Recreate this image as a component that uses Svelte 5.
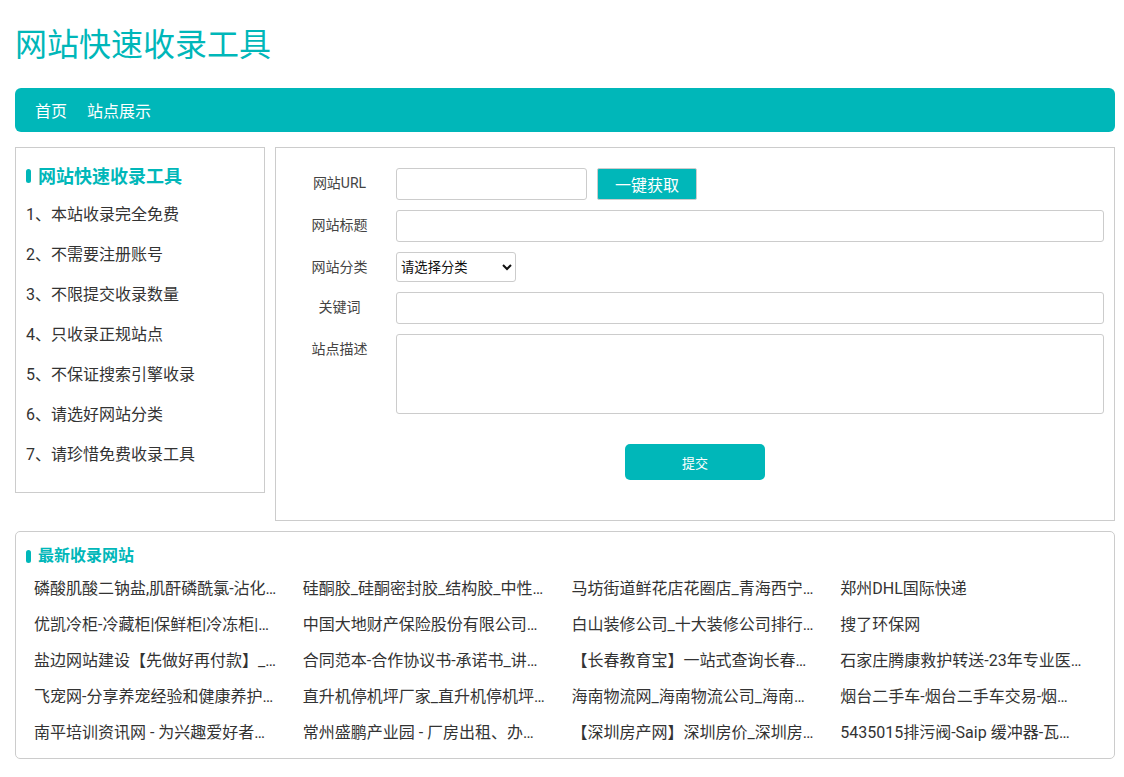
<script>
  const rules = [
    '1、本站收录完全免费',
    '2、不需要注册账号',
    '3、不限提交收录数量',
    '4、只收录正规站点',
    '5、不保证搜索引擎收录',
    '6、请选好网站分类',
    '7、请珍惜免费收录工具'
  ]

  const sites = [
    '磷酸肌酸二钠盐,肌酐磷酰氯-沾化…',
    '硅酮胶_硅酮密封胶_结构胶_中性…',
    '马坊街道鲜花店花圈店_青海西宁…',
    '郑州DHL国际快递',
    '优凯冷柜-冷藏柜|保鲜柜|冷冻柜|…',
    '中国大地财产保险股份有限公司…',
    '白山装修公司_十大装修公司排行…',
    '搜了环保网',
    '盐边网站建设【先做好再付款】_…',
    '合同范本-合作协议书-承诺书_讲…',
    '【长春教育宝】一站式查询长春…',
    '石家庄腾康救护转送-23年专业医…',
    '飞宠网-分享养宠经验和健康养护…',
    '直升机停机坪厂家_直升机停机坪…',
    '海南物流网_海南物流公司_海南…',
    '烟台二手车-烟台二手车交易-烟…',
    '南平培训资讯网 - 为兴趣爱好者…',
    '常州盛鹏产业园 - 厂房出租、办…',
    '【深圳房产网】深圳房价_深圳房…',
    '5435015排污阀-Saip 缓冲器-瓦…'
  ]
</script>

<div class="page">
  <h1>网站快速收录工具</h1>

  <nav class="nav">
    <a href="#home">首页</a>
    <a href="#sites">站点展示</a>
  </nav>

  <div class="columns">
    <aside class="side">
      <h2 class="head">网站快速收录工具</h2>
      <ul>
        {#each rules as rule}
          <li>{rule}</li>
        {/each}
      </ul>
    </aside>

    <form class="form">
      <div class="row">
        <label for="url">网站URL</label>
        <input id="url" class="short" type="text" />
        <button type="button" class="fetch">一键获取</button>
      </div>
      <div class="row">
        <label for="title">网站标题</label>
        <input id="title" type="text" />
      </div>
      <div class="row">
        <label for="cat">网站分类</label>
        <select id="cat">
          <option>请选择分类</option>
        </select>
      </div>
      <div class="row">
        <label for="kw">关键词</label>
        <input id="kw" type="text" />
      </div>
      <div class="row">
        <label for="desc">站点描述</label>
        <textarea id="desc"></textarea>
      </div>
      <div class="actions">
        <button type="button" class="submit">提交</button>
      </div>
    </form>
  </div>

  <section class="latest">
    <h2 class="head small">最新收录网站</h2>
    <div class="grid">
      {#each sites as site}
        <a href="#site" class="site">{site}</a>
      {/each}
    </div>
  </section>
</div>

<style>
  :global(body) {
    background: #fff;
  }

  .page {
    padding: 0 9px 0 15px;
    font-family: Roboto, "Noto Sans CJK SC", sans-serif;
    color: #333;
    font-size: 16px;
  }

  h1 {
    margin: 0;
    padding-top: 22px;
    height: 88px;
    box-sizing: border-box;
    font-size: 32px;
    line-height: 46px;
    font-weight: 400;
    color: #00b7b9;
  }

  .nav {
    display: flex;
    gap: 20px;
    height: 44px;
    padding-left: 20px;
    background: #00b7b9;
    border-radius: 6px;
    align-items: center;
  }

  .nav a {
    color: #fff;
    text-decoration: none;
    font-size: 16px;
  }

  .columns {
    display: flex;
    align-items: flex-start;
    gap: 10px;
    margin-top: 15px;
  }

  .side {
    width: 250px;
    height: 346px;
    box-sizing: border-box;
    border: 1px solid #ccc;
    padding: 17px 10px 0;
  }

  .head {
    margin: 0;
    padding-left: 12px;
    position: relative;
    font-size: 18px;
    line-height: 24px;
    font-weight: 700;
    color: #00b7b9;
  }

  .head::before {
    content: "";
    position: absolute;
    left: 0;
    top: 4px;
    width: 5px;
    height: 14px;
    border-radius: 3px;
    background: #00b7b9;
  }

  .side ul {
    list-style: none;
    margin: 6px 0 0;
    padding: 0;
  }

  .side li {
    height: 40px;
    line-height: 40px;
    white-space: nowrap;
  }

  .form {
    flex: 1;
    height: 374px;
    box-sizing: border-box;
    border: 1px solid #ccc;
    padding: 20px 10px 0 0;
  }

  .row {
    display: flex;
    align-items: flex-start;
    gap: 10px;
    margin-bottom: 10px;
  }

  label {
    width: 110px;
    padding-left: 17px;
    flex: none;
    box-sizing: border-box;
    text-align: center;
    font-size: 14px;
    line-height: 30px;
    color: #444;
  }

  input,
  textarea {
    flex: 1;
    min-width: 0;
    height: 32px;
    box-sizing: border-box;
    border: 1px solid #ccc;
    border-radius: 3px;
    background: #fff;
    padding: 0 6px;
    margin: 0;
    font: inherit;
  }

  input.short {
    flex: none;
    width: 191px;
  }

  textarea {
    height: 80px;
    resize: none;
    display: block;
  }

  select {
    width: 120px;
    height: 30px;
    box-sizing: border-box;
    border: 1px solid #ccc;
    border-radius: 3px;
    background: #fff;
    color: #111;
    font-family: inherit;
    font-size: 13.33px;
    margin: 0;
  }

  button {
    border: 0;
    color: #fff;
    background: #00b7b9;
    font-family: inherit;
    margin: 0;
    padding: 0;
  }

  .fetch {
    width: 100px;
    height: 32px;
    border: 1px solid #ccc;
    border-radius: 2px;
    font-size: 16px;
  }

  .actions {
    display: flex;
    justify-content: center;
    margin-top: 30px;
    padding-left: 10px;
  }

  .submit {
    width: 140px;
    height: 36px;
    border-radius: 5px;
    font-size: 13px;
  }

  .latest {
    margin-top: 10px;
    height: 228px;
    box-sizing: border-box;
    border: 1px solid #ccc;
    border-radius: 5px;
    padding: 12px 10px 0;
  }

  .head.small {
    font-size: 16px;
  }

  .head.small::before {
    top: 6px;
    height: 13px;
  }

  .grid {
    display: grid;
    grid-template-columns: repeat(4, 268.75px);
    margin-top: 3px;
  }

  .site {
    display: block;
    height: 36px;
    line-height: 36px;
    padding: 0 10px 0 8px;
    white-space: nowrap;
    color: #333;
    text-decoration: none;
  }
</style>
